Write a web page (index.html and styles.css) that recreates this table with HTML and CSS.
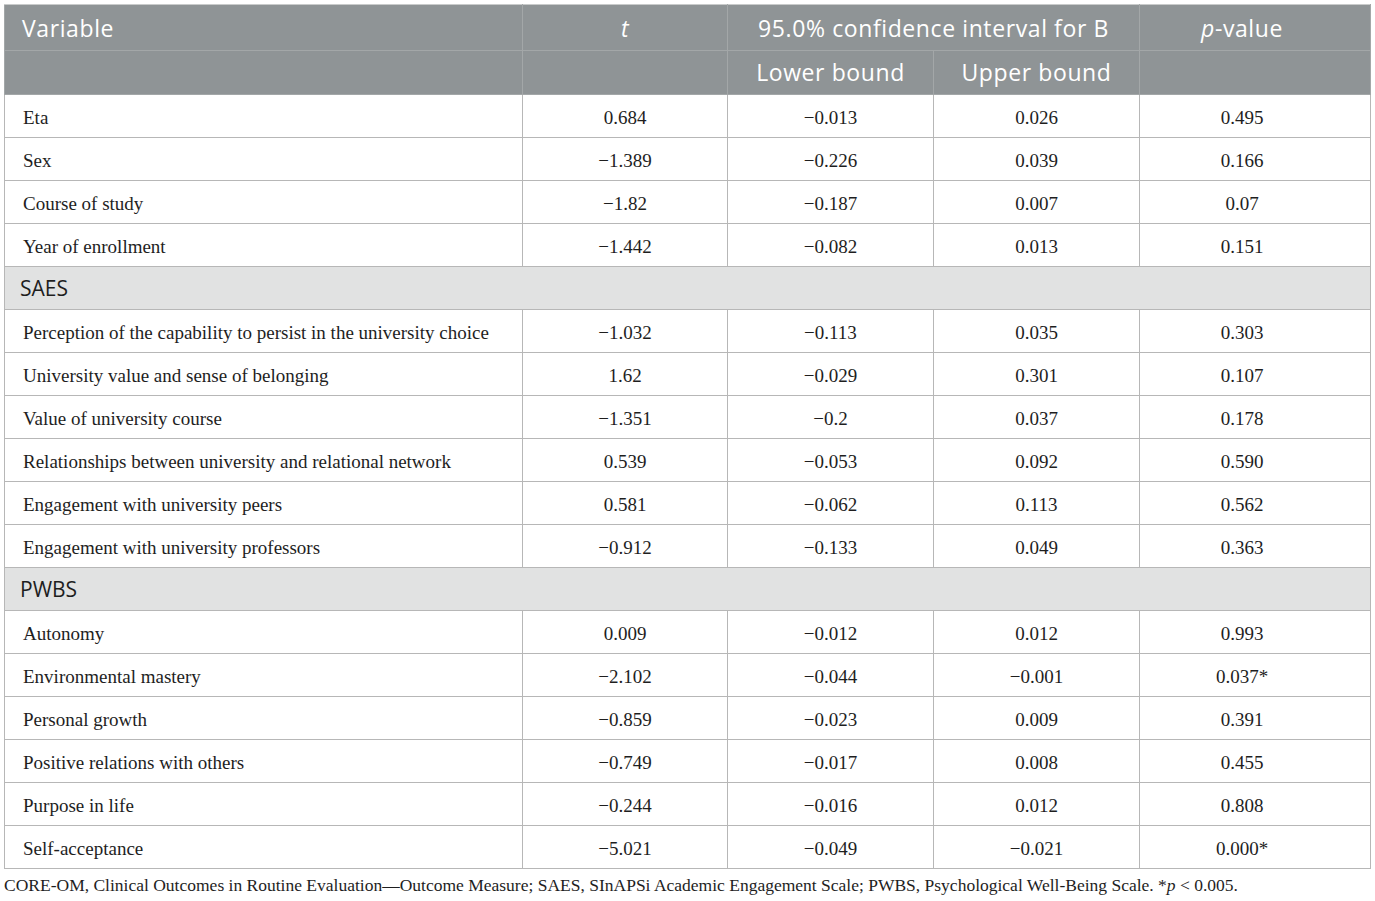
FILE: index.html
```html
<!DOCTYPE html>
<html lang="en">
<head>
<meta charset="utf-8">
<link rel="stylesheet" href="styles.css">
</head>
<body>
<div class="wrap">
<table class="tbl">
  <colgroup>
    <col class="c1"><col class="c2"><col class="c3"><col class="c4"><col class="c5">
  </colgroup>
  <thead>
    <tr class="h1">
      <th class="left">Variable</th>
      <th><i>t</i></th>
      <th colspan="2">95.0% confidence interval for B</th>
      <th class="last"><i>p</i>-value</th>
    </tr>
    <tr class="h2">
      <th></th>
      <th></th>
      <th>Lower bound</th>
      <th>Upper bound</th>
      <th class="last"></th>
    </tr>
  </thead>
  <tbody>
    <tr><td>Eta</td><td>0.684</td><td>−0.013</td><td>0.026</td><td>0.495</td></tr>
    <tr><td>Sex</td><td>−1.389</td><td>−0.226</td><td>0.039</td><td>0.166</td></tr>
    <tr><td>Course of study</td><td>−1.82</td><td>−0.187</td><td>0.007</td><td>0.07</td></tr>
    <tr><td>Year of enrollment</td><td>−1.442</td><td>−0.082</td><td>0.013</td><td>0.151</td></tr>
    <tr class="sec"><td colspan="5">SAES</td></tr>
    <tr><td>Perception of the capability to persist in the university choice</td><td>−1.032</td><td>−0.113</td><td>0.035</td><td>0.303</td></tr>
    <tr><td>University value and sense of belonging</td><td>1.62</td><td>−0.029</td><td>0.301</td><td>0.107</td></tr>
    <tr><td>Value of university course</td><td>−1.351</td><td>−0.2</td><td>0.037</td><td>0.178</td></tr>
    <tr><td>Relationships between university and relational network</td><td>0.539</td><td>−0.053</td><td>0.092</td><td>0.590</td></tr>
    <tr><td>Engagement with university peers</td><td>0.581</td><td>−0.062</td><td>0.113</td><td>0.562</td></tr>
    <tr><td>Engagement with university professors</td><td>−0.912</td><td>−0.133</td><td>0.049</td><td>0.363</td></tr>
    <tr class="sec"><td colspan="5">PWBS</td></tr>
    <tr><td>Autonomy</td><td>0.009</td><td>−0.012</td><td>0.012</td><td>0.993</td></tr>
    <tr><td>Environmental mastery</td><td>−2.102</td><td>−0.044</td><td>−0.001</td><td>0.037*</td></tr>
    <tr><td>Personal growth</td><td>−0.859</td><td>−0.023</td><td>0.009</td><td>0.391</td></tr>
    <tr><td>Positive relations with others</td><td>−0.749</td><td>−0.017</td><td>0.008</td><td>0.455</td></tr>
    <tr><td>Purpose in life</td><td>−0.244</td><td>−0.016</td><td>0.012</td><td>0.808</td></tr>
    <tr><td>Self-acceptance</td><td>−5.021</td><td>−0.049</td><td>−0.021</td><td>0.000*</td></tr>
  </tbody>
</table>
<p class="note">CORE-OM, Clinical Outcomes in Routine Evaluation—Outcome Measure; SAES, SInAPSi Academic Engagement Scale; PWBS, Psychological Well-Being Scale. *<i>p</i> &lt; 0.005.</p>
</div>
</body>
</html>
```

FILE: styles.css
```css
html, body {
  margin: 0;
  padding: 0;
  background: #ffffff;
}
.wrap {
  padding: 4px 0 0 4px;
}
.tbl {
  border-collapse: collapse;
  table-layout: fixed;
  width: 1366px;
  font-family: "Liberation Serif", "Times New Roman", serif;
  font-size: 19px;
  color: #1e1e1e;
}
.c1 { width: 518px; }
.c2 { width: 205px; }
.c3 { width: 206px; }
.c4 { width: 206px; }
.c5 { width: 231px; }
.tbl th {
  background: #8f9496;
  color: #ffffff;
  font-family: "Open Sans", "Noto Sans", sans-serif;
  font-weight: 400;
  font-size: 23px;
  letter-spacing: 0.6px;
  text-align: center;
  padding: 0;
  border: 1px solid #a3a7a8;
  border-top-color: #c9cbcb;
}
.tbl th.left {
  text-align: left;
  padding-left: 17px;
}
.tbl th.last,
.tbl td:last-child {
  padding-right: 26px;
}
.h1 th { height: 45px; padding-bottom: 0; }
.h2 th { height: 41px; padding-bottom: 2px; }
.tbl td {
  height: 39px;
  padding: 3px 0 0 0;
  text-align: center;
  border: 1px solid #b7b7b7;
}
.tbl td:first-child {
  text-align: left;
  padding-left: 18px;
}
.tbl tr.sec td {
  background: #e1e2e2;
  font-family: "Open Sans", "Noto Sans", sans-serif;
  font-size: 21px;
  color: #1e1e1e;
  height: 42px;
  padding: 0 0 0 15px;
}
.note {
  margin: 6px 0 0 0;
  font-family: "Liberation Serif", "Times New Roman", serif;
  font-size: 17.5px;
  color: #1e1e1e;
}
```
